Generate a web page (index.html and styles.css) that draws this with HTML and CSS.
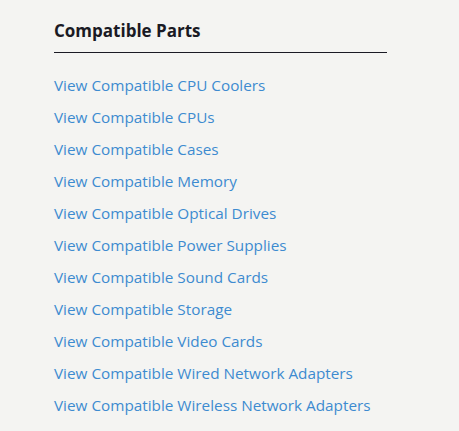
FILE: index.html
```html
<!DOCTYPE html>
<html>
<head>
<meta charset="utf-8">
<link rel="stylesheet" href="styles.css">
</head>
<body>
<section class="panel">
  <h2 class="title">Compatible Parts</h2>
  <ul class="links">
    <li><a href="#">View Compatible CPU Coolers</a></li>
    <li><a href="#">View Compatible CPUs</a></li>
    <li><a href="#">View Compatible Cases</a></li>
    <li><a href="#">View Compatible Memory</a></li>
    <li><a href="#">View Compatible Optical Drives</a></li>
    <li><a href="#">View Compatible Power Supplies</a></li>
    <li><a href="#">View Compatible Sound Cards</a></li>
    <li><a href="#">View Compatible Storage</a></li>
    <li><a href="#">View Compatible Video Cards</a></li>
    <li><a href="#">View Compatible Wired Network Adapters</a></li>
    <li><a href="#">View Compatible Wireless Network Adapters</a></li>
  </ul>
</section>
</body>
</html>
```
FILE: styles.css
```css
html, body {
  margin: 0;
  padding: 0;
  background: #f4f4f2;
}
body {
  font-family: "Open Sans", "Noto Sans", sans-serif;
}
.panel {
  width: 333px;
  padding: 19px 0 0 54px;
}
.title {
  margin: 0;
  font-size: 17px;
  font-weight: 700;
  color: #1a1a24;
  line-height: 24px;
  padding-bottom: 9px;
  border-bottom: 1px solid #1a1a24;
}
.links {
  list-style: none;
  margin: 0;
  padding: 21px 0 0 0;
}
.links li {
  height: 32px;
  line-height: 22px;
}
.links a {
  color: #3d8bd0;
  text-decoration: none;
  font-size: 15.3px;
}
```
